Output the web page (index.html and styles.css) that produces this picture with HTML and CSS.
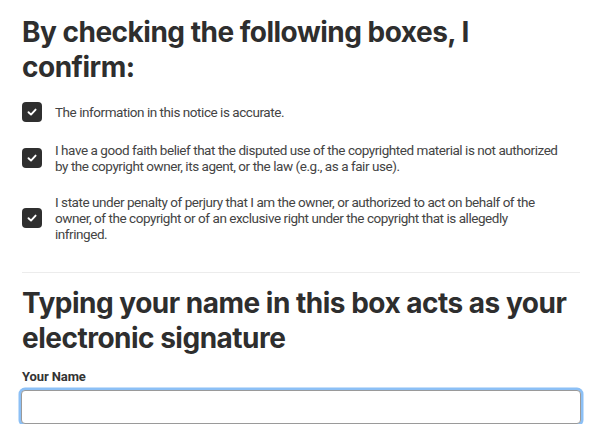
FILE: index.html
```html
<!DOCTYPE html>
<html lang="en">
<head>
    <meta charset="UTF-8">
    <meta name="viewport" content="width=device-width, initial-scale=1.0">
    <title>Counter Notice - Confirmation</title>
    <link rel="stylesheet" href="styles.css">
</head>
<body>
    <div class="container">
        <h2 class="section-title">By checking the following boxes, I confirm:</h2>

        <ul class="confirm-list">
            <li class="confirm-item">
                <span class="checkbox">
                    <svg viewBox="0 0 12 12" width="12" height="12"><path d="M2.5 6.2 L5 8.6 L9.6 3.6" fill="none" stroke="#fff" stroke-width="1.9" stroke-linecap="round" stroke-linejoin="round"/></svg>
                </span>
                <span class="confirm-text">The information in this notice is accurate.</span>
            </li>
            <li class="confirm-item">
                <span class="checkbox">
                    <svg viewBox="0 0 12 12" width="12" height="12"><path d="M2.5 6.2 L5 8.6 L9.6 3.6" fill="none" stroke="#fff" stroke-width="1.9" stroke-linecap="round" stroke-linejoin="round"/></svg>
                </span>
                <span class="confirm-text">I have a good faith belief that the disputed use of the copyrighted material is not authorized by the copyright owner, its agent, or the law (e.g., as a fair use).</span>
            </li>
            <li class="confirm-item">
                <span class="checkbox">
                    <svg viewBox="0 0 12 12" width="12" height="12"><path d="M2.5 6.2 L5 8.6 L9.6 3.6" fill="none" stroke="#fff" stroke-width="1.9" stroke-linecap="round" stroke-linejoin="round"/></svg>
                </span>
                <span class="confirm-text">I state under penalty of perjury that I am the owner, or authorized to act on behalf of the owner, of the copyright or of an exclusive right under the copyright that is allegedly infringed.</span>
            </li>
        </ul>

        <hr class="divider">

        <h2 class="section-title">Typing your name in this box acts as your electronic signature</h2>

        <label class="field-label" for="your-name">Your Name</label>
        <input class="text-input" id="your-name" type="text">
    </div>
</body>
</html>
```

FILE: styles.css
```css
body {
    margin: 0;
    font-family: Inter, "Noto Sans", sans-serif;
    background-color: #fff;
    color: #333;
}

.container {
    padding: 15px 20px 0 22px;
}

.section-title {
    margin: 0;
    font-size: 28px;
    line-height: 35px;
    font-weight: 700;
    color: #2e2e2e;
    letter-spacing: -0.5px;
}

.confirm-list {
    list-style: none;
    margin: 17px 0 0;
    padding: 0 18px 0 0;
    display: flex;
    flex-direction: column;
    gap: 20px;
}

.confirm-item {
    display: flex;
    align-items: center;
    gap: 13px;
}

.checkbox {
    flex: 0 0 20px;
    width: 20px;
    height: 20px;
    border-radius: 4px;
    background-color: #2f2f2f;
    display: flex;
    align-items: center;
    justify-content: center;
}

.confirm-text {
    font-family: Roboto, "Noto Sans", sans-serif;
    font-size: 13.5px;
    line-height: 16px;
    letter-spacing: -0.45px;
    color: #444;
}

.divider {
    border: 0;
    border-top: 1px solid #ececec;
    margin: 30px 0 13px;
}

.field-label {
    display: block;
    margin-top: 13px;
    font-family: Roboto, "Noto Sans", sans-serif;
    font-size: 13px;
    line-height: 16px;
    font-weight: 700;
    letter-spacing: -0.1px;
    color: #333;
}

.text-input {
    display: block;
    box-sizing: border-box;
    width: calc(100% + 2px);
    height: 34px;
    margin-top: 5px;
    margin-left: -1px;
    border: 1px solid #9a9a9a;
    border-radius: 4px;
    box-shadow: 0 0 0 2.5px #8cc0f6;
    outline: none;
    font-family: inherit;
    font-size: 14px;
    padding: 0 8px;
}
```
